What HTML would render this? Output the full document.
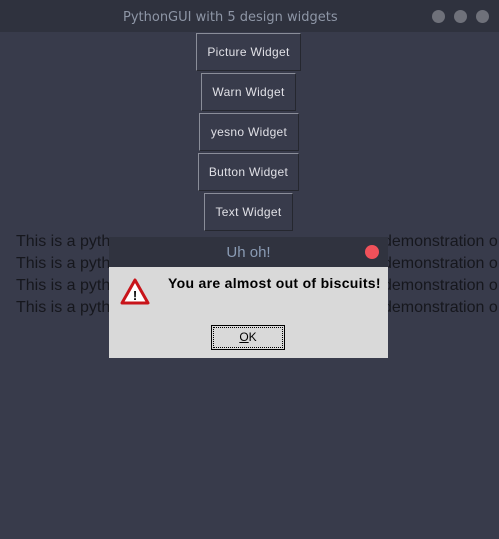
<!DOCTYPE html>
<html><head><style>
*{margin:0;padding:0;box-sizing:border-box}
body{width:499px;height:539px;background:#383b4b;position:relative;overflow:hidden;font-family:"Liberation Sans",sans-serif}
.tb{position:absolute;left:0;top:0;width:499px;height:32px;background:#2f323e;color:#8e96a6;font-family:"DejaVu Sans",sans-serif;font-size:13px;line-height:35px}
.dot{position:absolute;top:10px;width:13px;height:13px;border-radius:50%;background:#6f717a}
.btn{position:absolute;border:1px solid #8a8d99;border-right-color:#25272f;border-bottom-color:#25272f;color:#e0e0e6;font-size:12px;letter-spacing:0.3px;text-align:center;line-height:36px;background:#383b4b}
.t{position:absolute;color:#16171d;font-size:16px;line-height:22px}
.dlg{position:absolute;left:109px;top:237px;width:279px;height:121px;background:#d9d9d9}
.dt{height:30px;background:#30333f;color:#8a9bb4;font-family:"Liberation Sans",sans-serif;font-size:15px;text-align:center;line-height:31px;position:relative}
</style></head><body>
<div class="tb"><span style="position:absolute;left:123px">PythonGUI with 5 design widgets</span>
<div class="dot" style="left:432px"></div><div class="dot" style="left:454px"></div><div class="dot" style="left:476px"></div></div>
<div class="btn" style="left:196px;top:33px;width:105px;height:38px">Picture Widget</div>
<div class="btn" style="left:201px;top:73px;width:95px;height:38px">Warn Widget</div>
<div class="btn" style="left:199px;top:113px;width:100px;height:38px">yesno Widget</div>
<div class="btn" style="left:198px;top:153px;width:101px;height:38px">Button Widget</div>
<div class="btn" style="left:204px;top:193px;width:89px;height:38px">Text Widget</div>
<div class="t" style="left:16px;top:231px">This is a python<br>This is a python<br>This is a python<br>This is a python</div>
<div class="t" style="left:383px;top:231px">demonstration o<br>demonstration o<br>demonstration o<br>demonstration o</div>
<div class="dlg">
<div class="dt">Uh oh!<div style="position:absolute;left:256px;top:8px;width:14px;height:14px;border-radius:50%;background:#f0515a"></div></div>
<svg style="position:absolute;left:11px;top:41px" width="30" height="28" viewBox="0 0 30 28"><path d="M15 2 L28 25 L2 25 Z" fill="#fff" stroke="#c8141a" stroke-width="3" stroke-linejoin="round"/><text x="15" y="22" font-size="13" font-weight="bold" text-anchor="middle" font-family="Liberation Sans" fill="#000">!</text></svg>
<div style="position:absolute;left:59px;top:38px;font-size:14px;font-weight:bold;letter-spacing:0.3px;color:#000">You are almost out of biscuits!</div>
<div style="position:absolute;left:102px;top:88px;width:74px;height:25px;border:1px solid #000;background:#d9d9d9;font-size:12px;text-align:center;line-height:22px;color:#000;outline:1px dotted #000;outline-offset:-3px"><u>O</u>K</div>
</div>
</body></html>
